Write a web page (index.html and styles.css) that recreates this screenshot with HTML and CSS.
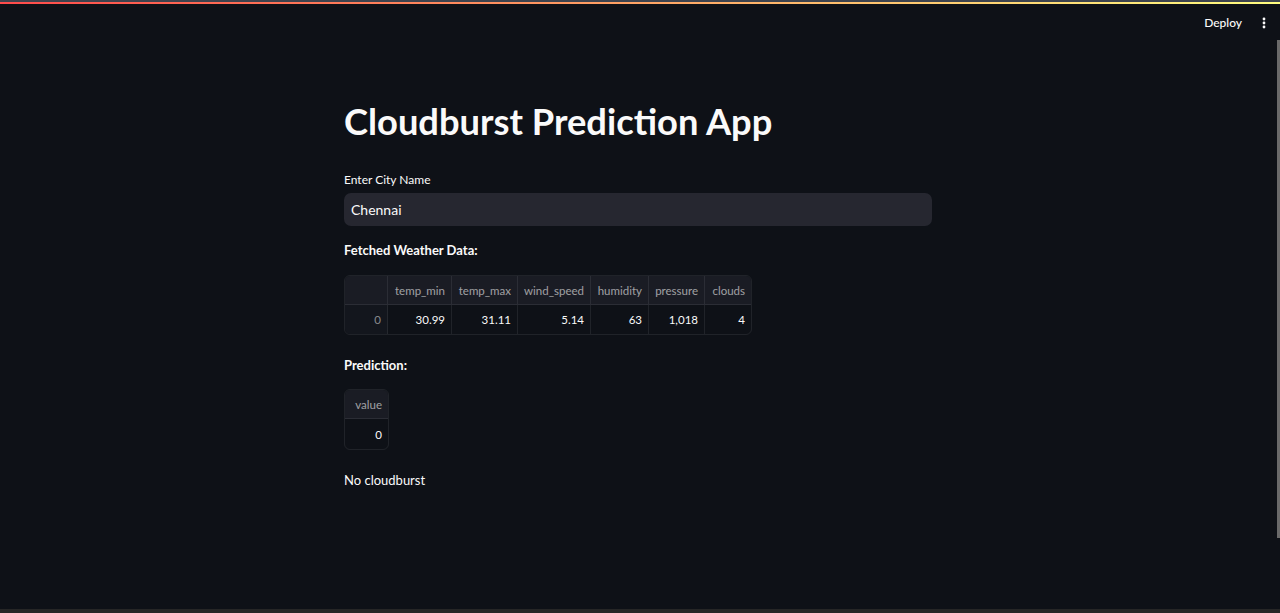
FILE: index.html
```html
<!DOCTYPE html>
<html>
<head>
<meta charset="utf-8">
<link rel="stylesheet" href="styles.css">
</head>
<body>
<div class="app">
  <div class="topline"></div>
  <div class="decoration"></div>
  <header class="header">
    <span class="deploy">Deploy</span>
    <span class="kebab">
      <svg width="4" height="12" viewBox="0 0 4 12"><circle cx="2" cy="2" r="1.4" fill="#fafafa"/><circle cx="2" cy="6" r="1.4" fill="#fafafa"/><circle cx="2" cy="10" r="1.4" fill="#fafafa"/></svg>
    </span>
  </header>
  <main class="main">
    <div class="block">
      <h1 class="title">Cloudburst Prediction App</h1>
      <label class="label">Enter City Name</label>
      <div class="input">Chennai</div>
      <p class="heading">Fetched Weather Data:</p>
      <table class="df wide">
        <colgroup>
          <col style="width:43px"><col style="width:64px"><col style="width:66px"><col style="width:73px"><col style="width:58px"><col style="width:56px"><col style="width:46px">
        </colgroup>
        <thead>
          <tr><th class="idx"></th><th>temp_min</th><th>temp_max</th><th>wind_speed</th><th>humidity</th><th>pressure</th><th>clouds</th></tr>
        </thead>
        <tbody>
          <tr><td class="idx">0</td><td>30.99</td><td>31.11</td><td>5.14</td><td>63</td><td>1,018</td><td>4</td></tr>
        </tbody>
      </table>
      <p class="heading pred">Prediction:</p>
      <table class="df small">
        <colgroup><col style="width:43px"></colgroup>
        <thead><tr><th>value</th></tr></thead>
        <tbody><tr><td>0</td></tr></tbody>
      </table>
      <p class="result">No cloudburst</p>
    </div>
  </main>
  <div class="scrollbar"></div>
  <div class="bottomline"></div>
</div>
</body>
</html>
```

FILE: styles.css
```css
* { box-sizing: border-box; }
html, body {
  margin: 0;
  padding: 0;
  background: #0e1117;
  overflow: hidden;
}
body {
  font-family: "Source Sans Pro", Lato, "Liberation Sans", sans-serif;
  color: #fafafa;
}
.app {
  position: relative;
  width: 1280px;
  height: 613px;
  display: flex;
  flex-direction: column;
}
.topline {
  height: 2px;
  background: #3d434e;
}
.decoration {
  height: 2px;
  background: linear-gradient(90deg, #ff4b4b, #fffd80);
}
.header {
  height: 37px;
  display: flex;
  align-items: center;
  justify-content: flex-end;
  padding-right: 14px;
  gap: 20px;
}
.deploy {
  font-size: 12px;
  font-weight: 500;
  color: #fafafa;
}
.kebab {
  display: flex;
  align-items: center;
  height: 12px;
}
.kebab svg { display: block; }
.main {
  flex: 1;
  padding-right: 4px;
}
.block {
  width: 588px;
  margin: 0 auto;
  padding-top: 59px;
}
.title {
  margin: 0;
  font-size: 36.3px;
  font-weight: 700;
  line-height: 42px;
  letter-spacing: 0;
}
.label {
  display: block;
  margin-top: 30px;
  font-size: 12px;
  line-height: 16px;
}
.input {
  margin-top: 5px;
  height: 33px;
  background: #262730;
  border-radius: 7px;
  padding: 0 7px;
  display: flex;
  align-items: center;
  font-size: 14px;
}
.heading {
  margin: 15px 0 0;
  font-size: 13px;
  font-weight: 700;
  line-height: 18px;
}
.df {
  margin-top: 16px;
  border-collapse: separate;
  border-spacing: 0;
  table-layout: fixed;
  border: 1px solid rgba(250,250,250,0.08);
  border-radius: 6px;
  overflow: hidden;
  font-size: 11.5px;
}
.df.wide { width: 406px; }
.df.small { width: 43px; }
.df th, .df td {
  height: 29px;
  padding: 0 6px;
  text-align: right;
  white-space: nowrap;
  border-right: 1px solid rgba(250,250,250,0.08);
}
.df th:last-child, .df td:last-child { border-right: none; }
.df th {
  background: #1a1c24;
  color: rgba(250,250,250,0.6);
  font-weight: 400;
  border-bottom: 1px solid rgba(250,250,250,0.08);
  height: 29px;
}
.df td { color: #fafafa; height: 29px; }
.df.small td { height: 30px; }
.df td.idx { color: rgba(250,250,250,0.5); background: #13161d; }
.df th.idx { background: #1a1c24; }
.pred { margin-top: 21px; }
.df.small { margin-top: 15px; }
.result {
  margin: 21px 0 0;
  font-size: 13px;
  line-height: 18px;
}
.scrollbar {
  position: absolute;
  right: 0;
  top: 40px;
  width: 3px;
  height: 498px;
  background: #6a6a6a;
}
.bottomline {
  position: absolute;
  left: 0;
  bottom: 0;
  width: 100%;
  height: 4px;
  background: #262626;
}
```
